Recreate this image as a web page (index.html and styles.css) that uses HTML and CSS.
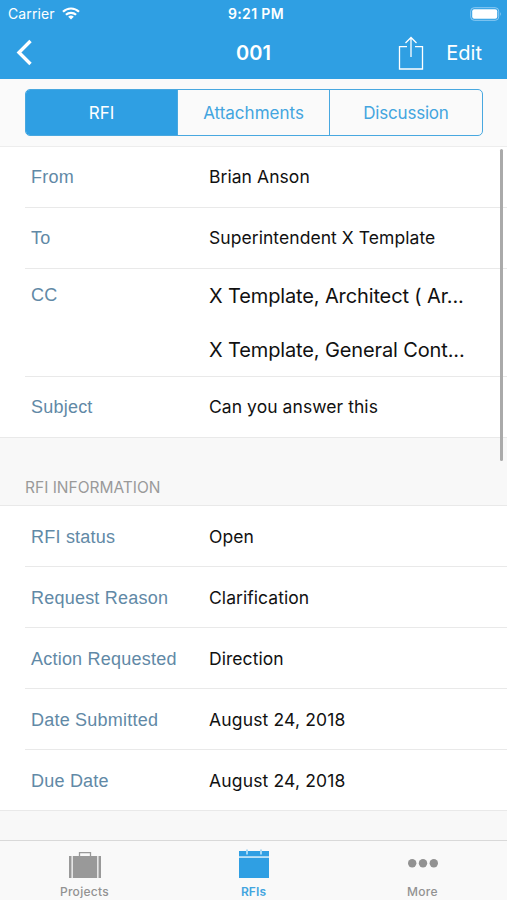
FILE: index.html
```html
<!DOCTYPE html>
<html lang="en">
<head>
<meta charset="utf-8">
<title>RFI 001</title>
<link rel="stylesheet" href="styles.css">
</head>
<body>
<div class="screen">
  <header class="header">
    <div class="status">
      <div class="carrier"><span class="carrier-name">Carrier</span>
        <svg class="wifi" width="18" height="13" viewBox="0 0 18 13" fill="none" stroke="#fff" stroke-width="2.2"><path d="M1 4.8C5.5.4 12.500.4 17 4.800M3.900 7.800C6.800 5.100 11.200 5.100 14.100 7.800"/><path d="M9 12.500L6.200 9.700Q9 7.400 11.800 9.700Z" fill="#fff" stroke="none"/></svg>
      </div>
      <span class="clock">9:21 PM</span>
      <svg class="battery" width="32" height="14" viewBox="0 0 32 14"><rect x=".7" y=".7" width="28" height="12.600" rx="3.500" fill="none" stroke="#8ecbf3" stroke-width="1"/><rect x="2.200" y="2.200" width="25" height="9.600" rx="2" fill="#fff"/><path d="M30 5Q31.800 7 30 9Z" fill="#8ecbf3"/></svg>
    </div>
    <nav class="nav">
      <svg class="back" width="18" height="28" viewBox="0 0 18 28" fill="none" stroke="#fff" stroke-width="3.400"><path d="M15.500 2L4 13.500L15.500 25"/></svg>
      <h1 class="title"><span>001</span></h1>
      <div class="actions">
        <svg class="share" width="26" height="34" viewBox="0 0 26 34" fill="none" stroke="#fff" stroke-width="1.300"><path d="M9 10.700H1.500V33H24.500V10.700H17M13 21V1.500M7.500 7L13 1.500L18.500 7"/></svg>
        <span class="edit">Edit</span>
      </div>
    </nav>
  </header>
  <div class="segments-bar">
    <div class="segments">
      <div class="segment active"><span>RFI</span></div>
      <div class="segment"><span class="seg-attach">Attachments</span></div>
      <div class="segment"><span class="seg-discuss">Discussion</span></div>
    </div>
  </div>
  <main class="content">
    <section class="group">
      <div class="row"><span class="label">From</span><span class="value">Brian Anson</span></div>
      <div class="row"><span class="label">To</span><span class="value">Superintendent X Template</span></div>
      <div class="row row-cc"><span class="label">CC</span><div class="people"><span class="person">X Template, Architect ( Ar...</span><span class="person second">X Template, General Cont...</span></div></div>
      <div class="row"><span class="label">Subject</span><span class="value">Can you answer this</span></div>
    </section>
    <h2 class="heading">RFI INFORMATION</h2>
    <section class="group info">
      <div class="row"><span class="label">RFI status</span><span class="value">Open</span></div>
      <div class="row"><span class="label">Request Reason</span><span class="value">Clarification</span></div>
      <div class="row"><span class="label">Action Requested</span><span class="value">Direction</span></div>
      <div class="row"><span class="label">Date Submitted</span><span class="value date">August 24, 2018</span></div>
      <div class="row"><span class="label">Due Date</span><span class="value date">August 24, 2018</span></div>
    </section>
    <div class="scrollbar"></div>
  </main>
  <footer class="tabs">
    <div class="tab">
      <svg width="34" height="32" viewBox="0 0 34 32" fill="#999"><path d="M11.500 7V3.700H22.500V7" fill="none" stroke="#999" stroke-width="1.300"/><path d="M1 7H3.500V29H1ZM4.800 7H29.200V29H4.800ZM30.500 7H33V29H30.500Z"/></svg>
      <span>Projects</span>
    </div>
    <div class="tab selected">
      <svg width="34" height="32" viewBox="0 0 34 32" fill="#2f9fe3"><path d="M2 2H32V7.500H2ZM2 9H32V29H2Z"/><path d="M2 8.250H32" stroke="#b9e2f8" stroke-width="1.500"/><path d="M10 .5V5.500M24 .5V5.500" stroke="#a5d8f5" stroke-width="2"/></svg>
      <span>RFIs</span>
    </div>
    <div class="tab">
      <svg width="34" height="32" viewBox="0 0 34 32" fill="#929292"><circle cx="6.200" cy="14.300" r="4.200"/><circle cx="17" cy="14.300" r="4.200"/><circle cx="27.800" cy="14.300" r="4.200"/></svg>
      <span>More</span>
    </div>
  </footer>
</div>
</body>
</html>
```
FILE: styles.css
```css
* { box-sizing: border-box; }
body { margin: 0; background: #f8f8f8; font-family: Inter, "Liberation Sans", sans-serif; color: #111; }
.screen { width: 507px; height: 900px; display: flex; flex-direction: column; overflow: hidden; }
svg { display: block; flex: none; }
.header { height: 79px; background: #2f9fe3; color: #fff; flex: none; }
.status { height: 27px; display: grid; grid-template-columns: 1fr auto 1fr; align-items: center; padding: 0 5px 0 8px; }
.carrier { display: flex; align-items: center; gap: 7px; font-size: 14px; letter-spacing: .1px; }
.clock { font-size: 14px; font-weight: 600; letter-spacing: .35px; margin-left: 2px; }
.battery { justify-self: end; }
.nav { height: 52px; display: grid; grid-template-columns: 1fr auto 1fr; align-items: center; padding: 0 25px 0 15px; }
.title { margin: 0 0 0 10px; font-size: 20px; font-weight: 600; line-height: 24px; }
.actions { display: flex; justify-content: flex-end; align-items: center; gap: 22px; }
.edit { font-size: 20px; line-height: 24px; }
.segments-bar { height: 68px; padding: 10px 24px 11px 25px; border-bottom: 1px solid #ededed; background: #fafafa; flex: none; }
.segments { height: 47px; display: grid; grid-template-columns: 151px 152px 1fr; border: 1px solid #48a8e0; border-radius: 5px; background: #fafafa; }
.segment { display: flex; align-items: center; justify-content: center; color: #43a5df; font-size: 17px; }
.segment + .segment { border-left: 1px solid #48a8e0; }
.segment.active { background: #2f9fe3; color: #fff; border-radius: 4px 0 0 4px; }
.seg-discuss { letter-spacing: -.2px; }
.content { position: relative; flex: 1; }
.group { background: #fff; border-bottom: 1px solid #e9e9e9; }
.row { height: 61px; margin-left: 25px; padding-left: 6px; display: grid; grid-template-columns: 178px 1fr; align-items: center; border-bottom: 1px solid #e9e9e9; }
.group .row:last-child { border-bottom: 0; height: 60px; }
.info .row { padding-top: 2px; }
.label { font-family: "Liberation Sans", sans-serif; font-size: 18px; line-height: 22px; letter-spacing: .22px; color: #6189a6; white-space: nowrap; }
.value { font-size: 17.5px; line-height: 22px; letter-spacing: .06px; white-space: nowrap; }
.date { letter-spacing: .16px; }
.row-cc { height: 108px; align-items: start; padding-top: 15px; }
.people { display: flex; flex-direction: column; gap: 30px; }
.person { font-size: 20px; line-height: 24px; letter-spacing: -.13px; white-space: nowrap; }
.heading { height: 68px; margin: 0; padding: 40px 0 0 25px; font-size: 15.5px; line-height: 20px; font-weight: 400; color: #9a9a9a; border-bottom: 1px solid #e9e9e9; }
.scrollbar { position: absolute; right: 4px; top: 2px; width: 3px; height: 312px; border-radius: 2px; background: #aaa; }
.tabs { height: 60px; flex: none; display: grid; grid-template-columns: repeat(3, 1fr); border-top: 1px solid #d9d9d9; background: #f9f9f9; padding-top: 8px; }
.tab { display: flex; flex-direction: column; align-items: center; gap: 3px; font-size: 12px; line-height: 15px; font-weight: 500; letter-spacing: .3px; color: #929292; }
.selected { color: #43a5df; font-weight: 600; letter-spacing: .1px; }
```
